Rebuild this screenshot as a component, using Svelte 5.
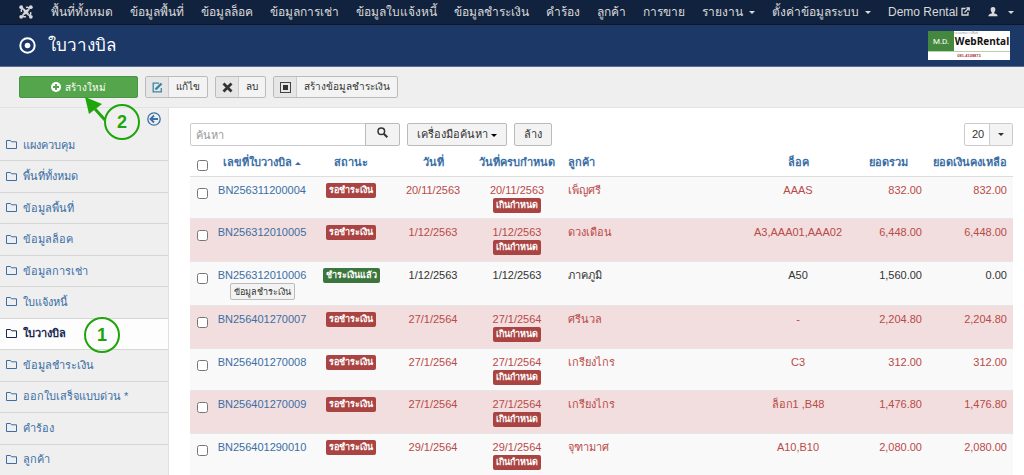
<script lang="ts">
    let search = $state('');
    let limit = $state('20');
    let selected: string[] = $state([]);

    const menu = [
        { label: 'พื้นที่ทั้งหมด' },
        { label: 'ข้อมูลพื้นที่' },
        { label: 'ข้อมูลล็อค' },
        { label: 'ข้อมูลการเช่า' },
        { label: 'ข้อมูลใบแจ้งหนี้' },
        { label: 'ข้อมูลชำระเงิน' },
        { label: 'คำร้อง' },
        { label: 'ลูกค้า' },
        { label: 'การขาย' },
        { label: 'รายงาน', caret: true },
        { label: 'ตั้งค่าข้อมูลระบบ', caret: true }
    ];

    const sidebar = [
        'แผงควบคุม',
        'พื้นที่ทั้งหมด',
        'ข้อมูลพื้นที่',
        'ข้อมูลล็อค',
        'ข้อมูลการเช่า',
        'ใบแจ้งหนี้',
        'ใบวางบิล',
        'ข้อมูลชำระเงิน',
        'ออกใบเสร็จแบบด่วน *',
        'คำร้อง',
        'ลูกค้า'
    ];
    const current = 'ใบวางบิล';

    const bills = [
        { no: 'BN256311200004', paid: false, date: '20/11/2563', due: '20/11/2563', customer: 'เพ็ญศรี', lot: 'AAAS', total: '832.00', left: '832.00' },
        { no: 'BN256312010005', paid: false, date: '1/12/2563', due: '1/12/2563', customer: 'ดวงเดือน', lot: 'A3,AAA01,AAA02', total: '6,448.00', left: '6,448.00' },
        { no: 'BN256312010006', paid: true, date: '1/12/2563', due: '1/12/2563', customer: 'ภาคภูมิ', lot: 'A50', total: '1,560.00', left: '0.00' },
        { no: 'BN256401270007', paid: false, date: '27/1/2564', due: '27/1/2564', customer: 'ศรีนวล', lot: '-', total: '2,204.80', left: '2,204.80' },
        { no: 'BN256401270008', paid: false, date: '27/1/2564', due: '27/1/2564', customer: 'เกรียงไกร', lot: 'C3', total: '312.00', left: '312.00' },
        { no: 'BN256401270009', paid: false, date: '27/1/2564', due: '27/1/2564', customer: 'เกรียงไกร', lot: 'ล็อก1 ,B48', total: '1,476.80', left: '1,476.80' },
        { no: 'BN256401290010', paid: false, date: '29/1/2564', due: '29/1/2564', customer: 'จุฑามาศ', lot: 'A10,B10', total: '2,080.00', left: '2,080.00' }
    ];

    function toggleAll(e: Event) {
        selected = (e.target as HTMLInputElement).checked ? bills.map((b) => b.no) : [];
    }
</script>

<div lang="th">
    <nav class="navbar">
        <a class="joomla" href="#home" aria-label="Joomla">
            <svg width="14" height="14" viewBox="0 0 14 14" fill="none" stroke="#d9d9d9" stroke-width="2">
                <path d="M2.500 7C1.500 4.500 3.500 3 5.200 4.500L9.500 8.800M7 2.500C9.500 1.500 11 3.500 9.500 5.200L5.200 9.500M11.500 7C12.500 9.500 10.500 11 8.800 9.500L4.500 5.200M7 11.500C4.500 12.500 3 10.500 4.500 8.800L8.800 4.500" stroke-width="1.500" />
                <g fill="#d9d9d9" stroke="none">
                    <circle cx="2.200" cy="2.200" r="1.900" /><circle cx="11.800" cy="2.200" r="1.900" />
                    <circle cx="2.200" cy="11.800" r="1.900" /><circle cx="11.800" cy="11.800" r="1.900" />
                </g>
            </svg>
        </a>
        {#each menu as item}
            <a href="#menu">{item.label}{#if item.caret}<span class="caret"></span>{/if}</a>
        {/each}
        <a class="site" href="#site">
            Demo Rental
            <svg width="9" height="9" viewBox="0 0 9 9" fill="none" stroke="#d9d9d9" stroke-width="1.300">
                <path d="M4.500 1.500H1V8H7V5M3.500 5.500 8 1M5.300 .8H8.200V3.700" />
            </svg>
        </a>
        <a class="user" href="#user" aria-label="User">
            <svg width="10" height="10" viewBox="0 0 10 10" fill="#d9d9d9">
                <path d="M5 0C6.800 0 7.500 1.200 7.300 3 7.200 4.300 6.500 5 6.200 5.600V6.500C8 7 9.600 7.300 9.600 9.300H.4C.4 7.300 2 7 3.800 6.500V5.600C3.500 5 2.800 4.300 2.700 3 2.500 1.200 3.200 0 5 0Z" />
            </svg>
            <span class="caret"></span>
        </a>
    </nav>

    <header class="header">
        <svg width="17" height="17" viewBox="0 0 17 17" fill="none" stroke="#fff" stroke-width="2">
            <circle cx="8.500" cy="8.500" r="7.200" />
            <circle cx="8.500" cy="8.500" r="2.800" fill="#fff" stroke="none" />
        </svg>
        <h1>ใบวางบิล</h1>
        <div class="logo">
            <div class="logo-top">
                <span class="md">M.D.</span>
                <span class="name"><small>ระบบจัดการพื้นที่</small>WebRental</span>
            </div>
            <div class="phone">081-4108873</div>
        </div>
    </header>

    <div class="toolbar">
        <div class="new-wrap">
            <button class="btn-new">
                <svg width="10" height="10" viewBox="0 0 10 10">
                    <circle cx="5" cy="5" r="5" fill="#fff" />
                    <path d="M5 2V8M2 5H8" stroke="#54a54b" stroke-width="1.800" />
                </svg>
                สร้างใหม่
            </button>
            <svg class="arrow" width="24" height="24" viewBox="0 0 24 24">
                <path d="M10 12 20 23" stroke="#1ea50a" stroke-width="3" />
                <path d="M0 0 17 7 4 17Z" fill="#1ea50a" />
            </svg>
            <span class="step step-two">2</span>
        </div>
        <button class="btn">
            <span class="icon">
                <svg width="11" height="11" viewBox="0 0 11 11" fill="none" stroke="#3a87a0">
                    <path d="M7 1.200H1.200V9.800H9.300V6" stroke-width="1.300" />
                    <path d="M3.500 7.500 9.500 1.500" stroke-width="2.400" />
                </svg>
            </span>
            <span class="text">แก้ไข</span>
        </button>
        <button class="btn">
            <span class="icon">
                <svg width="11" height="11" viewBox="0 0 11 11" stroke="#333" stroke-width="2.800">
                    <path d="M1.500 1.500 9.500 9.500M9.500 1.500 1.500 9.500" />
                </svg>
            </span>
            <span class="text">ลบ</span>
        </button>
        <button class="btn">
            <span class="icon">
                <svg width="11" height="11" viewBox="0 0 11 11">
                    <rect x=".5" y=".5" width="10" height="10" fill="none" stroke="#444" />
                    <rect x="3" y="3" width="5" height="5" fill="#333" />
                </svg>
            </span>
            <span class="text">สร้างข้อมูลชำระเงิน</span>
        </button>
    </div>

    <div class="layout">
        <aside class="sidebar">
            <button class="collapse" aria-label="Toggle sidebar">
                <svg width="14" height="14" viewBox="0 0 14 14" fill="none" stroke="#3b6fa8">
                    <circle cx="7" cy="7" r="6.200" stroke-width="1.300" />
                    <path d="M11 7H4M7 3.500 3.500 7 7 10.500" stroke-width="1.800" />
                </svg>
            </button>
            <ul>
                {#each sidebar as item}
                    <li class:active={item === current}>
                        <a href="#list">
                            <svg width="11" height="10" viewBox="0 0 11 10" fill="none" stroke="currentColor">
                                <path d="M.5 .5H4.500L5.500 1.800H10.500V8.500H.5Z" />
                            </svg>
                            {item}
                        </a>
                        {#if item === current}<span class="step step-one">1</span>{/if}
                    </li>
                {/each}
            </ul>
        </aside>

        <main>
            <div class="filters">
                <div class="search">
                    <input type="text" aria-label="ค้นหา" placeholder="ค้นหา" bind:value={search} />
                    <button aria-label="ค้นหา">
                        <svg width="11" height="11" viewBox="0 0 11 11" fill="none" stroke="#333">
                            <circle cx="4.300" cy="4.300" r="3.300" stroke-width="1.500" />
                            <path d="M6.800 6.800 10.300 10.300" stroke-width="2" />
                        </svg>
                    </button>
                </div>
                <button class="filter-btn">เครื่องมือค้นหา<span class="caret"></span></button>
                <button class="filter-btn">ล้าง</button>
                <div class="limit">
                    <select aria-label="จำนวน" bind:value={limit}>
                        <option>20</option>
                        <option>50</option>
                        <option>100</option>
                    </select>
                    <span class="limit-arrow"><span class="caret"></span></span>
                </div>
            </div>

            <table>
                <thead>
                    <tr>
                        <th class="check"><input type="checkbox" aria-label="เลือกทั้งหมด" onchange={toggleAll} /></th>
                        <th class="no"><a href="#sort">เลขที่ใบวางบิล<span class="caret up"></span></a></th>
                        <th class="status"><a href="#sort">สถานะ</a></th>
                        <th class="date"><a href="#sort">วันที่</a></th>
                        <th class="due"><a href="#sort">วันที่ครบกำหนด</a></th>
                        <th class="customer"><a href="#sort">ลูกค้า</a></th>
                        <th class="lot"><a href="#sort">ล็อค</a></th>
                        <th class="total"><a href="#sort">ยอดรวม</a></th>
                        <th class="left"><a href="#sort">ยอดเงินคงเหลือ</a></th>
                    </tr>
                </thead>
                <tbody>
                    {#each bills as bill}
                        <tr class:overdue={!bill.paid}>
                            <td class="check"><input type="checkbox" aria-label={bill.no} value={bill.no} bind:group={selected} /></td>
                            <td class="no">
                                <a href="#bill">{bill.no}</a>
                                {#if bill.paid}<button class="pay-btn">ข้อมูลชำระเงิน</button>{/if}
                            </td>
                            <td><span class="label" class:success={bill.paid}>{bill.paid ? 'ชำระเงินแล้ว' : 'รอชำระเงิน'}</span></td>
                            <td>{bill.date}</td>
                            <td>
                                <div>{bill.due}</div>
                                {#if !bill.paid}<span class="label late">เกินกำหนด</span>{/if}
                            </td>
                            <td class="customer">{bill.customer}</td>
                            <td>{bill.lot}</td>
                            <td class="amount">{bill.total}</td>
                            <td class="amount">{bill.left}</td>
                        </tr>
                    {/each}
                </tbody>
            </table>
        </main>
    </div>
</div>

<style>
    :global(body) {
        background: #fff;
        color: #333;
        font-family: "Liberation Sans", Arial, sans-serif;
        font-size: 11px;
        line-height: 15px;
    }

    a {
        color: #3a6ea5;
        text-decoration: none;
    }

    button, input, select {
        font: inherit;
        color: inherit;
        box-sizing: border-box;
    }

    button {
        cursor: pointer;
    }

    svg {
        flex: none;
    }

    .caret {
        display: inline-block;
        border: 3px solid transparent;
        border-top-color: currentColor;
        border-bottom: 0;
        margin-left: 6px;
        vertical-align: middle;
    }

    .caret.up {
        border-top: 0;
        border-bottom: 3px solid currentColor;
        margin-left: 3px;
    }

    .navbar {
        display: flex;
        align-items: center;
        gap: 17px;
        height: 24px;
        padding: 0 10px 0 19px;
        background: #10223e;
        border-bottom: 1px solid #0b182c;
        white-space: nowrap;
    }

    .navbar a {
        color: #d9d9d9;
        font-size: 12px;
    }

    .navbar .joomla {
        display: flex;
        margin-right: 1px;
    }

    .user {
        display: flex;
        align-items: center;
        gap: 4px;
        margin-left: auto;
    }

    .header {
        display: flex;
        align-items: center;
        gap: 12px;
        height: 41px;
        padding: 0 14px 0 19px;
        background: #1c3867;
        border-bottom: 1px solid #5b6d91;
    }

    .header h1 {
        margin: 0;
        color: #fff;
        font-size: 17px;
        font-weight: normal;
        line-height: 24px;
    }

    .logo {
        width: 82px;
        margin-left: auto;
        background: #fff;
        text-align: center;
    }

    .logo-top {
        display: flex;
        height: 20px;
        border-bottom: 1px solid #b5d2b5;
    }

    .md {
        width: 26px;
        background: #44883f;
        color: #fff;
        font: 8px/21px Roboto, sans-serif;
    }

    .name {
        flex: 1;
        color: #111;
        font: bold 10px/11px "Open Sans", sans-serif;
    }

    .name small {
        display: block;
        color: #999;
        font-size: 3px;
        font-weight: normal;
        line-height: 5px;
        text-align: left;
    }

    .phone {
        color: #a33;
        font-size: 4px;
        font-weight: bold;
        line-height: 8px;
    }

    .toolbar {
        display: flex;
        gap: 7px;
        padding: 9px 19px;
        background: #efefef;
        border-bottom: 1px solid #e2e2e2;
        font-size: 10px;
    }

    .new-wrap {
        position: relative;
    }

    .btn-new {
        display: flex;
        align-items: center;
        justify-content: center;
        gap: 4px;
        width: 119px;
        height: 22px;
        padding: 0;
        background: #54a54b;
        border: 1px solid #4a9542;
        border-radius: 2px;
        color: #fff;
    }

    .arrow {
        position: absolute;
        top: 21px;
        left: 66px;
        z-index: 2;
    }

    .step {
        position: absolute;
        z-index: 2;
        box-sizing: border-box;
        width: 36px;
        height: 36px;
        border: 2px solid #1ea50a;
        border-radius: 50%;
        color: #1ea50a;
        font-size: 18px;
        font-weight: bold;
        line-height: 32px;
        text-align: center;
    }

    .step-two {
        top: 28px;
        left: 85px;
    }

    .step-one {
        top: -2px;
        left: 84px;
    }

    .btn {
        display: flex;
        height: 22px;
        padding: 0;
        background: #f3f3f3;
        border: 1px solid #bbb;
        border-radius: 2px;
        overflow: hidden;
        line-height: 20px;
    }

    .btn .icon {
        display: flex;
        align-items: center;
        justify-content: center;
        width: 22px;
        height: 20px;
        background: #e6e6e6;
        border-right: 1px solid #ccc;
    }

    .btn .text {
        padding: 0 7px;
    }

    .layout {
        display: flex;
    }

    .sidebar {
        display: flex;
        flex-direction: column;
        flex: none;
        width: 168px;
        background: #efefef;
        border-right: 1px solid #e0e0e0;
    }

    .collapse {
        align-self: flex-end;
        display: flex;
        margin: 4px 7px 4px 0;
        padding: 0;
        background: none;
        border: 0;
    }

    .sidebar ul {
        display: flex;
        flex: 1;
        flex-direction: column;
        list-style: none;
        margin: 0;
        padding: 0;
    }

    .sidebar li {
        position: relative;
        display: flex;
        flex: 1;
        align-items: center;
        border-bottom: 1px solid #d6d6d6;
    }

    .sidebar li a {
        display: flex;
        flex: 1;
        align-items: center;
        gap: 6px;
        padding: 0 6px;
    }

    .sidebar .active {
        background: #fdfdfd;
    }

    .sidebar .active a {
        color: #152850;
        font-weight: bold;
    }

    main {
        flex: 1;
        min-width: 0;
        padding: 15px 11px 0 21px;
    }

    .filters {
        display: flex;
        gap: 7px;
    }

    .search {
        display: flex;
    }

    .search input {
        width: 176px;
        height: 23px;
        padding: 0 5px;
        border: 1px solid #ccc;
        border-radius: 2px 0 0 2px;
    }

    .search input::placeholder {
        color: #999;
    }

    .search button, .filter-btn {
        height: 23px;
        background: #f3f3f3;
        border: 1px solid #bbb;
        border-radius: 2px;
        padding: 0 9px;
    }

    .search button {
        width: 35px;
        margin-left: -1px;
        padding: 0;
        border-radius: 0 2px 2px 0;
    }

    .filter-btn .caret {
        margin-left: 3px;
        color: #000;
    }

    .limit {
        position: relative;
        display: flex;
        width: 49px;
        margin-left: auto;
    }

    .limit select {
        appearance: none;
        width: 100%;
        height: 23px;
        padding: 0 7px;
        background: #fff;
        border: 1px solid #ccc;
        border-radius: 2px;
    }

    .limit-arrow {
        position: absolute;
        top: 1px;
        right: 1px;
        bottom: 1px;
        display: flex;
        align-items: center;
        justify-content: center;
        width: 22px;
        background: #f3f3f3;
        border-left: 1px solid #ccc;
        pointer-events: none;
    }

    .limit-arrow .caret {
        margin: 0;
    }

    table {
        width: 100%;
        table-layout: fixed;
        border-collapse: separate;
        border-spacing: 0;
    }

    th, td {
        box-sizing: border-box;
        padding: 0;
        text-align: center;
        vertical-align: top;
        white-space: nowrap;
    }

    th {
        height: 31px;
        padding-top: 9px;
        border-bottom: 1px solid #ddd;
    }

    td {
        height: 42px;
        padding-top: 6px;
        border-bottom: 1px solid #e6e6e6;
        background: #f9f9f9;
    }

    tbody tr:nth-child(even) td {
        height: 43px;
        background: #f2dede;
    }

    .overdue {
        color: #b94a48;
    }

    .check {
        width: 24px;
    }

    .check input {
        width: 11px;
        height: 11px;
        margin: 5px 0 0;
        vertical-align: top;
    }

    th.no { width: 96px; }
    th.status { width: 82px; }
    th.date { width: 82px; }
    th.due { width: 86px; }
    th.lot { width: 100px; }
    th.total { width: 80px; }
    th.left { width: 85px; }

    th.left, .amount {
        padding-right: 6px;
        text-align: right;
    }

    .customer {
        padding-left: 8px;
        text-align: left;
    }

    .label {
        display: inline-block;
        padding: 0 3px;
        background: #a94442;
        border-radius: 2px;
        color: #fff;
        font-size: 9px;
        font-weight: bold;
        line-height: 15px;
        vertical-align: top;
    }

    .label.success {
        background: #3c763d;
    }

    .pay-btn {
        display: block;
        height: 17px;
        margin: 0 auto 5px;
        padding: 0 3px;
        background: #f3f3f3;
        border: 1px solid #bbb;
        border-radius: 2px;
        font-size: 9px;
        line-height: 14px;
    }
</style>
